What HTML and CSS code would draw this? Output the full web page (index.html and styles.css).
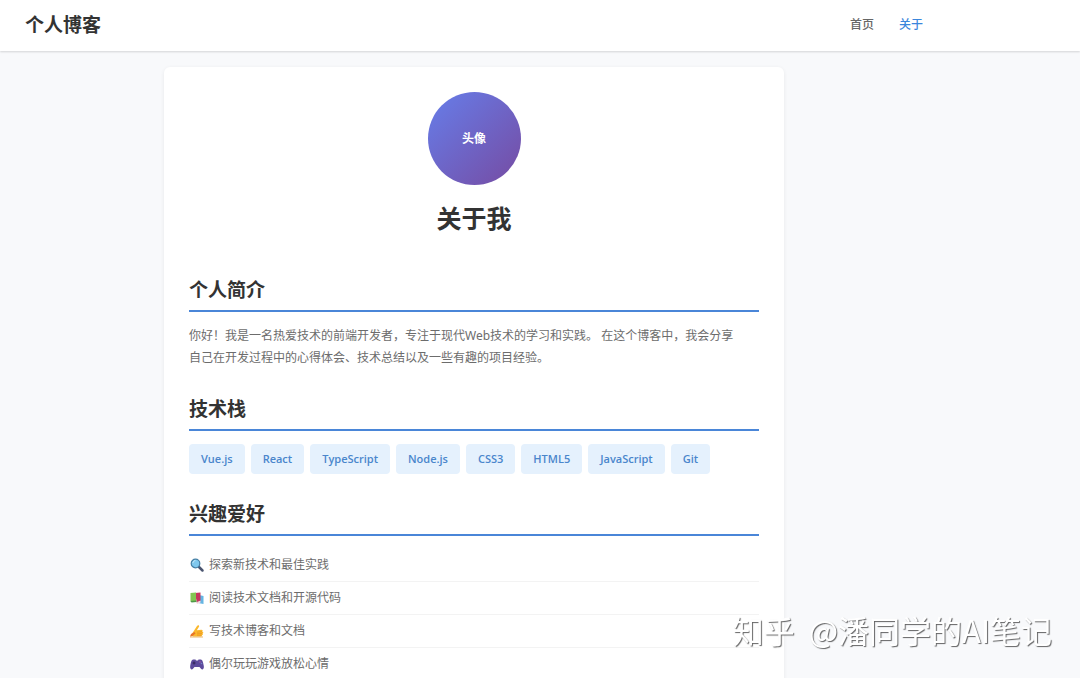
FILE: index.html
```html
<!DOCTYPE html>
<html lang="zh-CN">
<head>
    <meta charset="UTF-8">
    <meta name="viewport" content="width=device-width, initial-scale=1.0">
    <title>关于 - 个人博客</title>
    <link rel="stylesheet" href="styles.css">
</head>
<body>
    <header class="header">
        <div class="header-inner">
            <div class="logo">个人博客</div>
            <nav class="nav">
                <a href="#home">首页</a>
                <a href="#about" class="active">关于</a>
            </nav>
        </div>
    </header>

    <main class="main">
        <div class="card" id="about">
            <div class="profile">
                <div class="avatar">头像</div>
                <h1>关于我</h1>
            </div>

            <section class="section">
                <h2>个人简介</h2>
                <p>你好！我是一名热爱技术的前端开发者，专注于现代Web技术的学习和实践。 在这个博客中，我会分享<br>自己在开发过程中的心得体会、技术总结以及一些有趣的项目经验。</p>
            </section>

            <section class="section">
                <h2>技术栈</h2>
                <div class="tags">
                    <span class="tag">Vue.js</span>
                    <span class="tag">React</span>
                    <span class="tag">TypeScript</span>
                    <span class="tag">Node.js</span>
                    <span class="tag">CSS3</span>
                    <span class="tag">HTML5</span>
                    <span class="tag">JavaScript</span>
                    <span class="tag">Git</span>
                </div>
            </section>

            <section class="section">
                <h2>兴趣爱好</h2>
                <ul class="hobbies">
                    <li>
                        <svg class="icon" viewBox="0 0 16 16" aria-hidden="true">
                            <path d="M10 10l3.500 3.500" stroke="#4b5570" stroke-width="2.500" stroke-linecap="round"/>
                            <circle cx="6.500" cy="6.500" r="4.300" fill="#7fc8ee" stroke="#457fa5" stroke-width="1.200"/>
                            <path d="M3.800 6a2.800 2.800 0 0 1 2.600-2.500" fill="none" stroke="#c5ebfb" stroke-width="1"/>
                        </svg>
                        探索新技术和最佳实践
                    </li>
                    <li>
                        <svg class="icon" viewBox="0 0 16 16" aria-hidden="true">
                            <path d="M10 5l4.500 1v8L9 13z" fill="#65b5e3"/>
                            <path d="M6 3l5.500-.5v8.500l-3.500 2.500z" fill="#c7365f"/>
                            <path d="M8 12l3.500-1.500v2L8.500 14z" fill="#f3dce0"/>
                            <path d="M1.500 3L7 2.500v8.500l-5.500.5z" fill="#83c653"/>
                            <path d="M1.500 11l6-.5v1.500l-5 .5z" fill="#4e9848"/>
                        </svg>
                        阅读技术文档和开源代码
                    </li>
                    <li>
                        <svg class="icon" viewBox="0 0 16 16" aria-hidden="true">
                            <path d="M2.500 11.500L8 3c1-1.500 2.700-.8 2 .8L7.800 7.300l4.500-.5c1.500 0 1.800 1.200.8 1.700l.6.2c1 .5.700 1.600-.2 1.800.8.600.4 1.500-.6 1.700.3.800-.5 1.300-1.400 1.300H4z" fill="#fbb82c"/>
                            <path d="M8 9.200l5-.5M8 10.800l5-.3M8 12.200h4.500" stroke="#e48b1d" stroke-width=".6"/>
                            <path d="M1 13.500l1-2.500 3.500-2 1 1.500-3 2.500z" fill="#e8742a"/>
                            <path d="M1 14h13" stroke="#e3a54a" stroke-width=".8"/>
                        </svg>
                        写技术博客和文档
                    </li>
                    <li>
                        <svg class="icon" viewBox="0 0 16 16" aria-hidden="true">
                            <path d="M4.500 3.500h2l.5 1h2l.5-1h2c1.800 0 2.500 2 3.300 6.500.5 3-1.500 4.500-2.800 2.800L10.500 11h-5L4 12.800c-1.300 1.700-3.300.2-2.800-2.800C2 5.500 2.700 3.500 4.500 3.500z" fill="#5d4a9c"/>
                            <path d="M3.500 7h3M5 5.500v3" stroke="#302554" stroke-width="1"/>
                            <circle cx="11" cy="6" r=".8" fill="#a35ba8"/>
                            <circle cx="12.500" cy="7.500" r=".8" fill="#7385c7"/>
                        </svg>
                        偶尔玩玩游戏放松心情
                    </li>
                </ul>
            </section>
        </div>
    </main>

    <div class="watermark">
        <span>知乎</span>
        <span>@潘同学的AI笔记</span>
    </div>
</body>
</html>
```
FILE: styles.css
```css
* {
    margin: 0;
    padding: 0;
    box-sizing: border-box;
}

body {
    font-family: 'Noto Sans', 'Noto Sans CJK SC', sans-serif;
    font-size: 12px;
    line-height: 22px;
    color: #6c6c6c;
    background: #f8f9fb;
}

.header {
    background: #fff;
    border-bottom: 1px solid #fff;
    box-shadow: 0 1px 2px rgba(0, 0, 0, 0.15);
}

.header-inner {
    display: flex;
    justify-content: space-between;
    align-items: center;
    max-width: 948px;
    height: 50px;
    padding: 0 25px;
}

.logo {
    font-size: 19px;
    font-weight: bold;
    color: #333;
}

.nav {
    display: flex;
    gap: 25px;
}

.nav a {
    color: #666;
    font-weight: 500;
    text-decoration: none;
}

.nav a.active {
    color: #3a86dc;
}

.main {
    max-width: 948px;
    padding: 16px 25px;
}

.card {
    max-width: 620px;
    margin: 0 auto;
    padding: 25px;
    background: #fff;
    border-radius: 6px;
    box-shadow: 0 1px 4px rgba(0, 0, 0, 0.07);
}

.profile {
    display: flex;
    flex-direction: column;
    align-items: center;
    gap: 15px;
    margin-bottom: 40px;
}

.avatar {
    display: flex;
    align-items: center;
    justify-content: center;
    width: 93px;
    height: 93px;
    border-radius: 50%;
    background: linear-gradient(135deg, #667eea, #764ba2);
    color: #fff;
    font-weight: bold;
}

h1 {
    font-size: 25px;
    line-height: 36px;
    color: #333;
}

.section {
    margin-bottom: 26px;
}

h2 {
    margin-bottom: 13px;
    padding-bottom: 6px;
    border-bottom: 2px solid #4a86d8;
    font-size: 19px;
    line-height: 28px;
    color: #333;
}

.tags {
    display: flex;
    flex-wrap: wrap;
    gap: 6px;
}

.tag {
    padding: 4px 12px;
    border-radius: 4px;
    background: #e5f1fd;
    color: #4a86cc;
    font-family: 'Open Sans', sans-serif;
    font-size: 11px;
    font-weight: 600;
}

.hobbies {
    list-style: none;
}

.hobbies li {
    display: flex;
    align-items: center;
    gap: 4px;
    padding: 5px 0;
    border-bottom: 1px solid #f3f3f3;
}

.icon {
    width: 16px;
    height: 16px;
    fill: none;
}

.watermark {
    position: fixed;
    right: 28px;
    bottom: 24px;
    display: flex;
    gap: 14px;
    font-family: 'Noto Sans CJK SC', sans-serif;
    font-size: 31px;
    line-height: 48px;
    color: #fff;
    text-shadow: 1px 1px 1px rgba(0, 0, 0, 0.6);
}
```
